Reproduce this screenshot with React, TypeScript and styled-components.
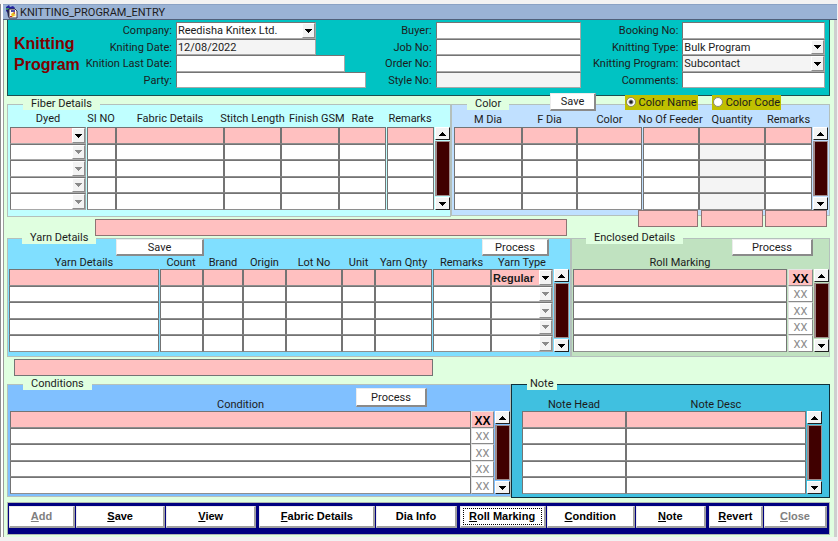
import React from "react";
import styled, { createGlobalStyle, css } from "styled-components";

const mint = "#e0ffe0";
const pink = "#ffc0c0";
const line = "#747474";

const GlobalStyle = createGlobalStyle`
  * { box-sizing: border-box; }
  body {
    margin: 0;
    background: #f2f2f2;
    color: #1c1c1c;
    font: 11px/13px Roboto, "Liberation Sans", sans-serif;
  }
  button, input, select { font: inherit; color: inherit; margin: 0; border-radius: 0; }
`;

const Frame = styled.main`
  margin: 4px 1px 0 0;
  padding-left: 2px;
  background: #fff;
  border-left: 1px solid #8c8c8c;
`;

const TitleBar = styled.header`
  display: flex;
  align-items: center;
  gap: 2px;
  height: 16px;
  padding: 0 2px;
  background: #9ab3d5;
  border-top: 1px solid #8aa2c4;
  border-bottom: 1px solid #50607a;
`;

const TitleText = styled.h1`
  margin: 0;
  font-size: 11px;
  font-weight: 400;
`;

const Form = styled.form`
  padding: 0 4px 2px 3px;
  background: ${mint};
  border-left: 1px solid #9c9c9c;
  border-right: 3px solid #cfcfcf;
`;

const Master = styled.section`
  display: grid;
  grid-template-columns: 75fr 282fr 216fr 244fr;
  height: 76px;
  margin-bottom: 2px;
  padding: 1px 4px 0 1px;
  background: #00c3c3;
  border: 1px solid #1e5050;
  border-top: 0;
`;

const Heading = styled.h2`
  margin: 12px 0 0 5px;
  color: #800000;
  font: bold 16px/21px "Liberation Sans", Arial, sans-serif;
`;

const Fields = styled.div<{ $label: number }>`
  display: grid;
  grid-template-columns: ${(p) => p.$label}px 1fr;
  grid-template-rows: 17px 16px 17px 16px;
  column-gap: 4px;
  align-content: start;
  padding-top: 1px;
`;

const FieldLabel = styled.label`
  align-self: center;
  justify-self: end;
  white-space: nowrap;
`;

const boxed = css`
  border: 1px solid ${line};
  border-right-color: #a8a8a8;
  border-bottom-color: #a8a8a8;
`;

const TextField = styled.input<{ $width?: string; $muted?: boolean }>`
  width: ${(p) => p.$width ?? "100%"};
  height: 100%;
  min-width: 0;
  padding: 0 1px;
  background: ${(p) => (p.$muted ? "#f4f4f4" : "#fff")};
  outline: 0;
  ${boxed}
`;

const SelectWrap = styled.div<{ $width?: string }>`
  display: grid;
  width: ${(p) => p.$width ?? "100%"};
  height: 100%;
  min-width: 0;
  & > * { grid-area: 1 / 1; }
`;

const SelectInput = styled.select<{ $bg?: string; $bold?: boolean }>`
  appearance: none;
  width: 100%;
  height: 100%;
  min-width: 0;
  padding: 0 14px 0 1px;
  background: ${(p) => p.$bg ?? "#fff"};
  outline: 0;
  ${boxed}
  &:disabled { opacity: 1; }
  ${(p) => p.$bold && css`font: bold 11px/14px "Liberation Sans", Arial, sans-serif;`}
`;

const ArrowBox = styled.span`
  display: flex;
  align-items: center;
  justify-content: center;
  justify-self: end;
  width: 13px;
  margin: 1px;
  background: #f3f3f3;
  border: 1px solid #fff;
  border-right-color: #8c8c8c;
  border-bottom-color: #8c8c8c;
  pointer-events: none;
`;

const PanelRow = styled.div<{ $columns: string }>`
  display: grid;
  grid-template-columns: ${(p) => p.$columns};
  align-items: start;
`;

const Panel = styled.fieldset<{ $bg: string; $dark?: boolean; $pad?: string }>`
  min-width: 0;
  margin: 0;
  padding: ${(p) => p.$pad ?? "0 2px 6px 2px"};
  background: ${(p) => p.$bg};
  border: 1px solid ${(p) => (p.$dark ? "#10303a" : "#b4c0bc")};
`;

const Legend = styled.legend<{ $indent?: number; $pad?: number }>`
  height: 12px;
  margin-left: ${(p) => p.$indent ?? 13}px;
  padding: 0 ${(p) => p.$pad ?? 8}px;
  line-height: 12px;
  background: ${mint};
`;

const Actions = styled.div<{ $lift: number; $height: number; $pad: string; $between?: boolean; $overlap?: number }>`
  position: relative;
  display: flex;
  align-items: center;
  justify-content: ${(p) => (p.$between ? "space-between" : "flex-end")};
  height: ${(p) => p.$height}px;
  margin-top: -${(p) => p.$lift}px;
  margin-bottom: -${(p) => p.$overlap ?? 0}px;
  padding: ${(p) => p.$pad};
`;

const PushButton = styled.button<{ $width: number }>`
  width: ${(p) => p.$width}px;
  height: 100%;
  padding: 0;
  line-height: 13px;
  background: #fff;
  border: 1px solid #ececec;
  border-right: 2px solid #8a8a8a;
  border-bottom: 2px solid #8a8a8a;
`;

const RadioGroup = styled.div`
  display: flex;
  gap: 14px;
`;

const RadioLabel = styled.label`
  display: flex;
  align-items: center;
  gap: 3px;
  height: 15px;
  padding: 0 1px;
  white-space: nowrap;
  background: #c0c000;
`;

const Radio = styled.input`
  appearance: none;
  width: 10px;
  height: 10px;
  background: #fff;
  border: 1px solid #8c8c70;
  border-radius: 50%;
  &:checked { background: radial-gradient(circle, #222 1px, #fff 3px); }
`;

const GridRow = styled.div`
  display: flex;
  align-items: flex-end;
  gap: 1px;
`;

const DataTable = styled.table`
  flex: 1;
  width: 100%;
  min-width: 0;
  table-layout: fixed;
  border-collapse: collapse;
`;

const HeadCell = styled.th<{ $height: number }>`
  height: ${(p) => p.$height}px;
  padding: 0;
  font-weight: 400;
`;

const HeadText = styled.span<{ $start?: boolean }>`
  display: flex;
  justify-content: ${(p) => (p.$start ? "flex-start" : "center")};
  padding-left: ${(p) => (p.$start ? 8 : 0)}px;
  white-space: nowrap;
`;

const BodyRow = styled.tr`
  height: 17px;
  &:nth-child(even) { height: 16px; }
`;

const BodyCell = styled.td<{ $gap?: boolean }>`
  height: inherit;
  padding: 0 0 0 ${(p) => (p.$gap ? 1 : 0)}px;
`;

const CellInput = styled.input<{ $bg: string }>`
  display: block;
  width: 100%;
  height: 17px;
  padding: 0 1px;
  background: ${(p) => p.$bg};
  outline: 0;
  border: 1px solid ${line};
  border-bottom-color: #8e8e8e;
  ${BodyRow}:nth-child(even) & { height: 16px; }
`;

const CellSelectBox = styled.div`
  height: 17px;
  ${BodyRow}:nth-child(even) & { height: 16px; }
`;

const MarkButton = styled.button<{ $active: boolean }>`
  display: block;
  width: 100%;
  height: 17px;
  padding: 2px 0 0;
  overflow: hidden;
  line-height: 12px;
  color: #8a8a8a;
  background: #fff;
  border: 1px solid #e4e4e4;
  border-right-color: #8a8a8a;
  border-bottom-color: #8a8a8a;
  ${BodyRow}:nth-child(even) & { height: 16px; }
  ${(p) =>
    p.$active &&
    css`
      color: #000;
      background: ${pink};
      font: bold 12px/12px "Liberation Sans", Arial, sans-serif;
    `}
`;

const Scroller = styled.div`
  display: flex;
  flex-direction: column;
  flex: none;
  width: 15px;
  height: 83px;
`;

const ScrollButton = styled.button`
  display: flex;
  align-items: center;
  justify-content: center;
  height: 13px;
  padding: 0;
  background: #f3f3f3;
  border: 1px solid #fff;
  border-right-color: #202020;
  border-bottom-color: #202020;
`;

const ScrollTrack = styled.div`
  flex: 1;
  margin: 1px 0;
  background: #400000;
  border: 1px solid #a08c8c;
  border-width: 1px 1px 1px 2px;
`;

const Totals = styled.div`
  display: grid;
  grid-template-columns: 88fr 471fr 71fr 60fr 3fr 62fr 2fr 62fr 3fr;
  height: 26px;
  margin: -7px 0 -4px;
`;

const TotalField = styled.input<{ $column: number; $low?: boolean }>`
  position: relative;
  grid-column: ${(p) => p.$column};
  align-self: ${(p) => (p.$low ? "end" : "start")};
  width: 100%;
  min-width: 0;
  height: 17px;
  padding: 0 1px;
  background: ${pink};
  border: 1px solid #8e7474;
  outline: 0;
`;

const HintLine = styled.div`
  display: grid;
  grid-template-columns: 7fr 419fr 397fr;
  padding: 2px 0;
`;

const HintField = styled.input`
  grid-column: 2;
  width: 100%;
  height: 17px;
  padding: 0 1px;
  background: ${pink};
  border: 1px solid ${line};
  outline: 0;
`;

const Toolbar = styled.nav`
  display: grid;
  grid-template-columns: 66fr 89fr 90fr 118fr 80fr 88fr 88fr 70fr 56fr 63fr;
  gap: 1px;
  margin-top: 4px;
  padding: 3px 2px 6px 1px;
  background: #000080;
  border: 1px solid #b0b8b0;
`;

const ToolButton = styled.button<{ $group?: boolean }>`
  height: 22px;
  min-width: 0;
  margin-left: ${(p) => (p.$group ? 2 : 0)}px;
  padding: 0 2px;
  color: #000;
  font: bold 11px/13px "Liberation Sans", Arial, sans-serif;
  white-space: nowrap;
  background: #fff;
  border: 1px solid #ececec;
  border-right: 2px solid #a0a0a0;
  border-bottom: 2px solid #a0a0a0;
  &:disabled { color: #808080; }
`;

const FocusRing = styled.span`
  display: block;
  padding: 1px 0;
  border: 1px dotted #000;
`;

function Triangle({ up, faded }: { up?: boolean; faded?: boolean }) {
  return (
    <svg width="7" height="4" viewBox="0 0 7 4" shapeRendering="crispEdges" aria-hidden="true">
      <path d={up ? "M3 0h1v1h1v1h1v1h1v1H0V3h1V2h1V1h1z" : "M0 0h7v1H6v1H5v1H4v1H3V3H2V2H1V1H0z"} fill={faded ? "#8a8a8a" : "#000"} />
    </svg>
  );
}

function AppIcon() {
  return (
    <svg width="13" height="14" viewBox="0 0 13 14" aria-hidden="true">
      <path d="M1 2l3-2 1 2 3-1 2 2-1 3-6 2-2-2z" fill="#2222a0" />
      <path d="M1 3h3v2H1z" fill="#3c9070" />
      <path d="M2 5l2-1 1 7-2 1z" fill="#202048" />
      <path d="M4 4h6l2 2v7H4z" fill="#fffbe8" stroke="#303050" />
      <path d="M6 5h4v2H6z" fill="#5050a8" />
      <path d="M6 9l3-2v2l2 1-4 2z" fill="#e8c020" />
      <path d="M8 8l2-1v2zM5 11h2v1H5z" fill="#c02828" />
    </svg>
  );
}

interface DropDownProps {
  id?: string;
  label?: string;
  value?: string;
  bg?: string;
  bold?: boolean;
  width?: string;
  disabled?: boolean;
}

function DropDown({ id, label, value = "", bg, bold, width, disabled }: DropDownProps) {
  return (
    <SelectWrap $width={width}>
      <SelectInput id={id} aria-label={label} defaultValue={value} $bg={bg} $bold={bold} disabled={disabled}>
        <option value={value}>{value}</option>
      </SelectInput>
      <ArrowBox>
        <Triangle faded={disabled} />
      </ArrowBox>
    </SelectWrap>
  );
}

interface Field {
  label: string;
  value?: string;
  select?: boolean;
  muted?: boolean;
  width?: string;
}

function FieldGroup({ labelWidth, fields }: { labelWidth: number; fields: Field[] }) {
  return (
    <Fields $label={labelWidth}>
      {fields.map((f) => {
        const id = f.label.toLowerCase().replace(/ /g, "-");
        return (
          <React.Fragment key={id}>
            <FieldLabel htmlFor={id}>{f.label}:</FieldLabel>
            {f.select ? (
              <DropDown id={id} value={f.value} width={f.width} bg={f.muted ? "#f4f4f4" : undefined} />
            ) : (
              <TextField id={id} defaultValue={f.value} $width={f.width} $muted={f.muted} />
            )}
          </React.Fragment>
        );
      })}
    </Fields>
  );
}

interface Column {
  title: string;
  width: number;
  kind?: "select" | "mark";
  first?: string;
  muted?: boolean;
  gap?: boolean;
  start?: boolean;
}

function Grid({ columns, head }: { columns: Column[]; head: number }) {
  return (
    <GridRow>
      <DataTable>
        <colgroup>
          {columns.map((c, i) => (
            <col key={i} style={{ width: c.width }} />
          ))}
        </colgroup>
        <thead>
          <tr>
            {columns.map((c, i) => (
              <HeadCell key={i} $height={head} scope="col">
                <HeadText $start={c.start}>{c.title}</HeadText>
              </HeadCell>
            ))}
          </tr>
        </thead>
        <tbody>
          {[0, 1, 2, 3, 4].map((row) => (
            <BodyRow key={row}>
              {columns.map((c, i) => {
                const bg = row === 0 ? pink : c.muted ? "#f4f4f4" : "#fff";
                const label = `${c.title} ${row + 1}`;
                return (
                  <BodyCell key={i} $gap={c.gap}>
                    {c.kind === "select" ? (
                      <CellSelectBox>
                        <DropDown label={label} value={row === 0 ? c.first : ""} bg={bg} bold disabled={row > 0} />
                      </CellSelectBox>
                    ) : c.kind === "mark" ? (
                      <MarkButton type="button" $active={row === 0}>XX</MarkButton>
                    ) : (
                      <CellInput aria-label={label} $bg={bg} />
                    )}
                  </BodyCell>
                );
              })}
            </BodyRow>
          ))}
        </tbody>
      </DataTable>
      <Scroller>
        <ScrollButton type="button" aria-label="Scroll up">
          <Triangle up />
        </ScrollButton>
        <ScrollTrack />
        <ScrollButton type="button" aria-label="Scroll down">
          <Triangle />
        </ScrollButton>
      </Scroller>
    </GridRow>
  );
}

const fiberColumns: Column[] = [
  { title: "Dyed", width: 76, kind: "select" },
  { title: "SI NO", width: 30, gap: true },
  { title: "Fabric Details", width: 108 },
  { title: "Stitch Length", width: 57 },
  { title: "Finish GSM", width: 58, start: true },
  { title: "Rate", width: 47 },
  { title: "Remarks", width: 48, gap: true },
];

const colorColumns: Column[] = [
  { title: "M Dia", width: 68 },
  { title: "F Dia", width: 55 },
  { title: "Color", width: 65 },
  { title: "No Of Feeder", width: 57, gap: true },
  { title: "Quantity", width: 66, muted: true },
  { title: "Remarks", width: 47 },
];

const yarnColumns: Column[] = [
  { title: "Yarn Details", width: 150 },
  { title: "Count", width: 44, gap: true },
  { title: "Brand", width: 40 },
  { title: "Origin", width: 43 },
  { title: "Lot No", width: 56 },
  { title: "Unit", width: 33 },
  { title: "Yarn Qnty", width: 57 },
  { title: "Remarks", width: 59, gap: true },
  { title: "Yarn Type", width: 62, kind: "select", first: "Regular" },
];

const rollColumns: Column[] = [
  { title: "Roll Marking", width: 214 },
  { title: "", width: 26, kind: "mark", gap: true },
];

const conditionColumns: Column[] = [
  { title: "Condition", width: 461 },
  { title: "", width: 23, kind: "mark" },
];

const noteColumns: Column[] = [
  { title: "Note Head", width: 104 },
  { title: "Note Desc", width: 180 },
];

const tools = [
  { text: "Add", key: true, disabled: true },
  { text: "Save", key: true },
  { text: "View", key: true },
  { text: "Fabric Details", key: true, group: true },
  { text: "Dia Info" },
  { text: "Roll Marking", key: true, focus: true, group: true },
  { text: "Condition", key: true },
  { text: "Note", key: true },
  { text: "Revert", key: true, group: true },
  { text: "Close", key: true, disabled: true },
];

export default function App() {
  return (
    <>
      <GlobalStyle />
      <Frame>
        <TitleBar>
          <AppIcon />
          <TitleText>KNITTING_PROGRAM_ENTRY</TitleText>
        </TitleBar>
        <Form onSubmit={(e) => e.preventDefault()}>
          <Master>
            <Heading>Knitting Program</Heading>
            <FieldGroup
              labelWidth={88}
              fields={[
                { label: "Company", value: "Reedisha Knitex Ltd.", select: true, width: "74%" },
                { label: "Kniting Date", value: "12/08/2022", muted: true, width: "74%" },
                { label: "Knition Last Date", width: "89%" },
                { label: "Party" },
              ]}
            />
            <FieldGroup
              labelWidth={66}
              fields={[{ label: "Buyer" }, { label: "Job No" }, { label: "Order No" }, { label: "Style No", muted: true }]}
            />
            <FieldGroup
              labelWidth={97}
              fields={[
                { label: "Booking No" },
                { label: "Knitting Type", value: "Bulk Program", select: true },
                { label: "Knitting Program", value: "Subcontact", select: true, muted: true },
                { label: "Comments" },
              ]}
            />
          </Master>

          <PanelRow $columns="444fr 379fr">
            <Panel $bg="#c0ffff">
              <Legend>Fiber Details</Legend>
              <Grid columns={fiberColumns} head={17} />
            </Panel>
            <Panel $bg="#c0e0ff" $pad="0 2px 5px 2px">
              <Legend>Color</Legend>
              <Actions $lift={17} $height={18} $pad="0 46px 0 96px" $between>
                <PushButton type="button" $width={46}>Save</PushButton>
                <RadioGroup>
                  <RadioLabel>
                    <Radio type="radio" name="color-by" defaultChecked />
                    Color Name
                  </RadioLabel>
                  <RadioLabel>
                    <Radio type="radio" name="color-by" />
                    Color Code
                  </RadioLabel>
                </RadioGroup>
              </Actions>
              <Grid columns={colorColumns} head={16} />
            </Panel>
          </PanelRow>

          <Totals>
            <TotalField $column={2} $low aria-label="Fabric description" />
            <TotalField $column={4} aria-label="Feeder total" />
            <TotalField $column={6} aria-label="Quantity total" />
            <TotalField $column={8} aria-label="Remarks total" />
          </Totals>

          <PanelRow $columns="564fr 259fr">
            <Panel $bg="#80dfff" $pad="0 1px 4px 1px">
              <Legend>Yarn Details</Legend>
              <Actions $lift={5} $height={17} $pad="0 20px 0 107px" $between>
                <PushButton type="button" $width={88}>Save</PushButton>
                <PushButton type="button" $width={67}>Process</PushButton>
              </Actions>
              <Grid columns={yarnColumns} head={13} />
            </Panel>
            <Panel $bg="#c0e2c0" $pad="0 3px 4px 1px">
              <Legend>Enclosed Details</Legend>
              <Actions $lift={5} $height={17} $pad="0 13px 0 0">
                <PushButton type="button" $width={81}>Process</PushButton>
              </Actions>
              <Grid columns={rollColumns} head={13} />
            </Panel>
          </PanelRow>

          <HintLine>
            <HintField aria-label="Yarn description" />
          </HintLine>

          <PanelRow $columns="504fr 319fr">
            <Panel $bg="#80c0ff" $pad="0 2px 2px 2px">
              <Legend>Conditions</Legend>
              <Actions $lift={2} $height={19} $pad="0 81px 0 0" $overlap={9}>
                <PushButton type="button" $width={71}>Process</PushButton>
              </Actions>
              <Grid columns={conditionColumns} head={13} />
            </Panel>
            <Panel $bg="#40c0e0" $dark $pad="8px 7px 3px 10px">
              <Legend $indent={5} $pad={3}>Note</Legend>
              <Grid columns={noteColumns} head={13} />
            </Panel>
          </PanelRow>

          <Toolbar aria-label="Actions">
            {tools.map((t) => {
              const caption = t.key ? (
                <>
                  <u>{t.text[0]}</u>
                  {t.text.slice(1)}
                </>
              ) : (
                t.text
              );
              return (
                <ToolButton key={t.text} type="button" disabled={t.disabled} $group={t.group}>
                  {t.focus ? <FocusRing>{caption}</FocusRing> : caption}
                </ToolButton>
              );
            })}
          </Toolbar>
        </Form>
      </Frame>
    </>
  );
}
